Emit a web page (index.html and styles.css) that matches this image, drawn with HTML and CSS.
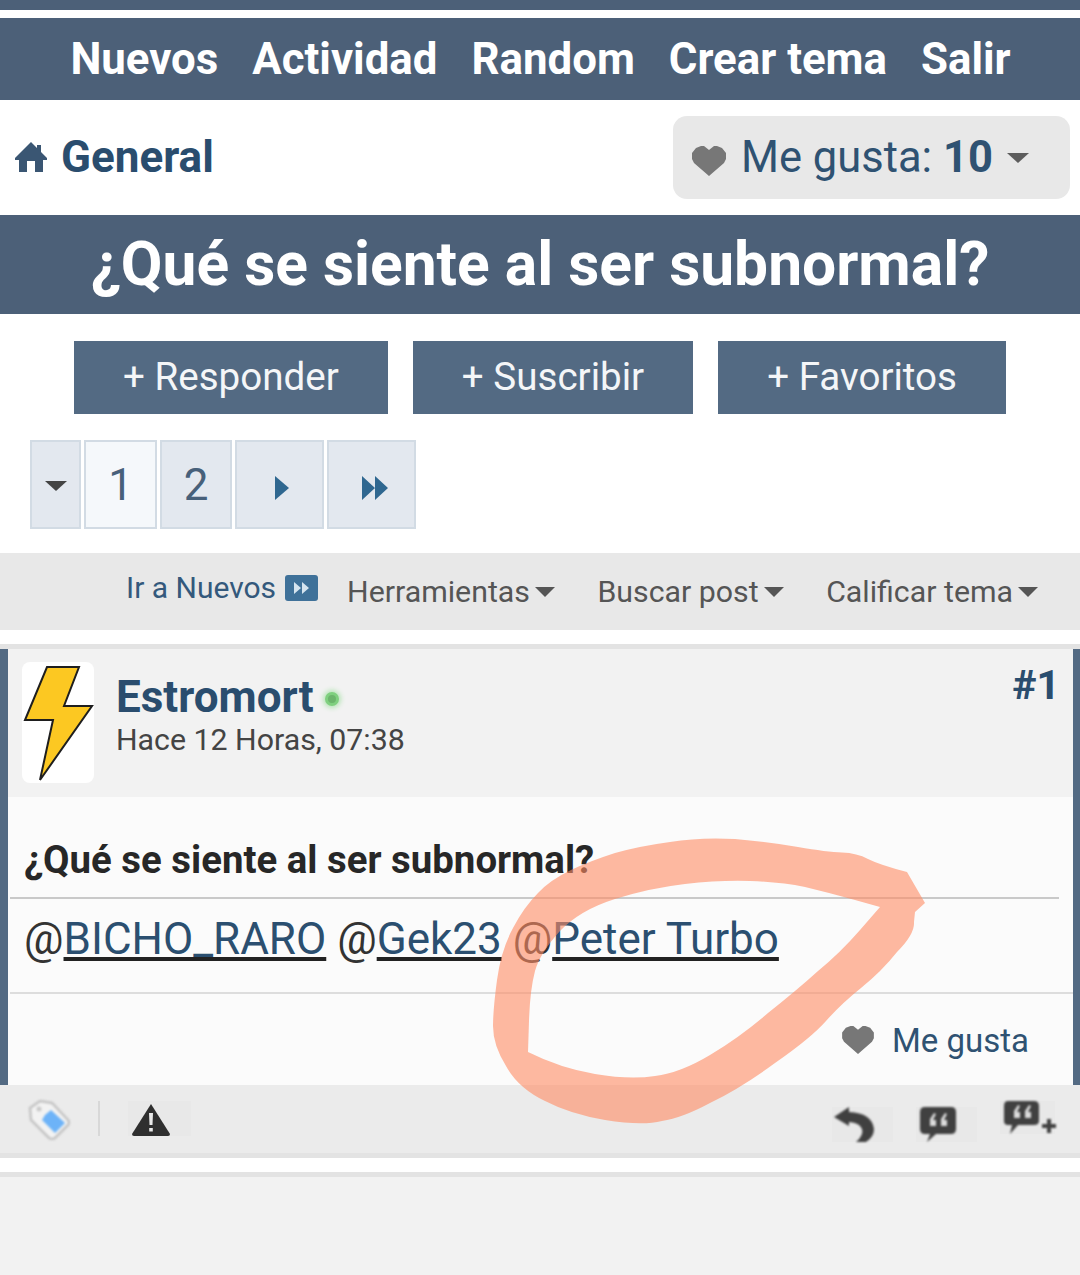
FILE: index.html
```html
<!DOCTYPE html>
<html lang="es">
<head>
    <meta charset="UTF-8">
    <meta name="viewport" content="width=device-width, initial-scale=1.0">
    <title>¿Qué se siente al ser subnormal?</title>
    <link rel="stylesheet" href="styles.css">
</head>
<body>
    <div class="page">
        <div class="top-strip"></div>

        <nav class="main-nav">
            <a>Nuevos</a>
            <a>Actividad</a>
            <a>Random</a>
            <a>Crear tema</a>
            <a>Salir</a>
        </nav>

        <div class="crumb-row">
            <div class="crumb">
                <svg class="home-icon" viewBox="0 0 32 30"><path d="M16 0 L22 6 V3 H26 V10 L32 16 V18 H28 V30 H20 V19 H12 V30 H4 V18 H0 V16 Z"/></svg>
                <span>General</span>
            </div>
            <div class="like-pill">
                <svg class="heart heart-big" viewBox="0 0 34 30"><path d="M17 30 L2 17 L0 13 V7 L4 2 L9 0 H12 L17 4 L22 0 H25 L30 2 L34 7 V13 L32 17 Z"/></svg>
                <span>Me gusta: <b>10</b></span>
                <i class="caret caret-pill"></i>
            </div>
        </div>

        <h1 class="thread-title">¿Qué se siente al ser subnormal?</h1>

        <div class="action-row">
            <a class="action-btn">+ Responder</a>
            <a class="action-btn">+ Suscribir</a>
            <a class="action-btn">+ Favoritos</a>
        </div>

        <div class="pager">
            <div class="page-cell cell-menu"><i class="caret"></i></div>
            <div class="page-cell cell-num cell-active">1</div>
            <div class="page-cell cell-num">2</div>
            <div class="page-cell cell-arrow">
                <svg class="pager-arrow" viewBox="0 0 14 24"><path d="M0 0 L14 12 L0 24 Z"/></svg>
            </div>
            <div class="page-cell cell-arrow">
                <svg class="pager-arrow" viewBox="0 0 26 24"><path d="M0 0 L13 12 L0 24 Z M13 0 L26 12 L13 24 Z"/></svg>
            </div>
        </div>

        <div class="tool-row">
            <a class="tool-new">Ir a Nuevos
                <svg class="new-icon" viewBox="0 0 33 26"><rect width="33" height="26" rx="3" fill="#3f7199"/><path d="M9 7 L16 13 L9 19 Z M17 7 L24 13 L17 19 Z" fill="#d5e4ef"/></svg>
            </a>
            <a class="tool-item">Herramientas<i class="caret caret-tool"></i></a>
            <a class="tool-item">Buscar post<i class="caret caret-tool"></i></a>
            <a class="tool-item">Calificar tema<i class="caret caret-tool"></i></a>
        </div>

        <article class="post">
            <header class="post-head">
                <div class="avatar">
                    <svg class="bolt" viewBox="0 0 72 121"><path d="M25 5 H57 L42 44 H70 L18 118 L31 58 H3 Z" fill="#fcc822" stroke="#1e1e1e" stroke-width="2"/></svg>
                </div>
                <div class="post-meta">
                    <div class="post-author">Estromort<span class="online-dot"></span></div>
                    <div class="post-date">Hace 12 Horas, 07:38</div>
                </div>
                <a class="post-number">#1</a>
            </header>

            <div class="post-body">
                <h2 class="post-title">¿Qué se siente al ser subnormal?</h2>
                <p class="post-text">@<a>BICHO_RARO</a> @<a>Gek23</a> @<a>Peter Turbo</a></p>
                <div class="post-like">
                    <svg class="heart heart-small" viewBox="0 0 34 30"><path d="M17 30 L2 17 L0 13 V7 L4 2 L9 0 H12 L17 4 L22 0 H25 L30 2 L34 7 V13 L32 17 Z"/></svg>
                    <span>Me gusta</span>
                </div>
            </div>

            <footer class="post-foot">
                <div class="foot-left">
                    <svg class="tag-icon" viewBox="0 0 42 40"><path d="M2 8 L12 1 L24 3 L40 20 Q42 23 40 25 L27 38 Q24 40 21 38 L3 20 Z" fill="#f2f2f2" stroke="#c4c4c4" stroke-width="2.5"/><path d="M17 15 L23 10 L37 23 L27 33 L14 20 Z" fill="#6db3f8"/><circle cx="11" cy="9" r="2.5" fill="#c9c9c9"/></svg>
                    <span class="foot-sep"></span>
                    <span class="foot-box warn-box">
                        <svg class="warn-icon" viewBox="0 0 38 32"><path d="M19 0 L38 30 Q38 32 36 32 H2 Q0 32 0 30 Z" fill="#2f2f2f"/><path d="M17 9 H21 L20.5 21 H17.5 Z M17.2 24 H20.8 V27.5 H17.2 Z" fill="#e8e8e8"/></svg>
                    </span>
                </div>
                <div class="foot-right">
                    <span class="foot-box foot-box-low">
                        <svg class="reply-icon" viewBox="0 0 40 35"><path d="M0 10 L15 0 V5 Q38 6 40 22 Q40 30 32 35 H22 Q30 28 28 22 Q26 16 15 15 V19 Z" fill="#404040"/></svg>
                    </span>
                    <span class="foot-box foot-box-low">
                        <svg class="quote-icon" viewBox="0 0 36 35"><path d="M5 0 H31 Q36 0 36 5 V22 Q36 27 31 27 H16 L7 35 L10 27 H5 Q0 27 0 22 V5 Q0 0 5 0 Z" fill="#404040"/><path d="M14 6 L10 12 V19 H16 V13 H13 L16 7 Z M25 6 L21 12 V19 H27 V13 H24 L27 7 Z" fill="#dcdcdc"/></svg>
                    </span>
                    <span class="foot-box foot-box-multi">
                        <svg class="multi-icon" viewBox="0 0 52 33"><path d="M4 0 H30 Q35 0 35 5 V20 Q35 24 30 24 H14 L6 33 L8 24 H4 Q0 24 0 20 V5 Q0 0 4 0 Z" fill="#404040"/><path d="M14 4 L10 10 V17 H16 V11 H13 L16 5 Z M25 4 L21 10 V17 H27 V11 H24 L27 5 Z" fill="#dcdcdc"/><path d="M43 18 H47 V23 H52 V27 H47 V32 H43 V27 H38 V23 H43 Z" fill="#404040"/></svg>
                    </span>
                </div>
            </footer>
        </article>

        <div class="page-bottom"></div>

        <svg class="scribble" viewBox="0 0 1080 1275">
            <path fill-rule="evenodd" d="M925 903 L907 872 Q880 865 868 859 Q857 853 842 852.5 Q827 852 798 847 Q770 842 735 839 Q700 837 670 842 Q640 846 615 853 Q590 861 571 870 Q550 880 538 893 Q524 907 513 928 Q501 950 497 980 Q493 1010 493 1026 Q493 1045 506 1066 Q518 1088 545 1101 Q570 1114 605 1120 Q642 1126 662 1121 Q682 1118 710 1103 Q741 1088 775 1063 Q811 1038 826 1021 Q841 1004 861 988 Q882 971 897 952 Q915 934 914 922 L915 912 Z M880 907 L855 900 Q830 893 805 887 Q780 882 750 881 Q720 880 685 884 Q650 888 615 899 Q580 910 560 931 Q540 953 535 971 Q530 990 529 1021 L528 1052 Q560 1068 595 1074 Q630 1080 655 1076 Q680 1073 710 1055 Q740 1037 768 1013 Q797 990 818 971 Q840 953 860 930 Z"/>
        </svg>
    </div>
</body>
</html>
```

FILE: styles.css
```css
body {
    font-family: Roboto, 'Liberation Sans', sans-serif;
    margin: 0;
    background: #fff;
    color: #333;
}
.page {
    position: relative;
    width: 1080px;
    height: 1275px;
    overflow: hidden;
}
.top-strip {
    height: 10px;
    margin-bottom: 8px;
    background: #4c6078;
}
.main-nav {
    display: flex;
    justify-content: center;
    gap: 34px;
    height: 82px;
    padding-left: 1px;
    box-sizing: border-box;
    align-items: center;
    background: #4c6078;
    color: #fff;
    font-size: 43.8px;
    font-weight: 700;
}
.crumb-row {
    display: flex;
    justify-content: space-between;
    align-items: center;
    height: 115px;
    padding: 0 10px 0 15px;
}
.crumb {
    display: flex;
    align-items: center;
    gap: 14px;
    margin-top: -2px;
    font-size: 44px;
    font-weight: 700;
    color: #2a4d6e;
}
.home-icon {
    width: 32px;
    height: 30px;
    fill: #3a5673;
}
.like-pill {
    display: flex;
    align-items: center;
    width: 397px;
    height: 83px;
    box-sizing: border-box;
    padding-left: 19px;
    background: #e8e8e8;
    border-radius: 14px;
    font-size: 43.5px;
    color: #2f5272;
}
.like-pill b {
    font-weight: 700;
}
.heart {
    fill: #777;
}
.heart-big {
    width: 34px;
    height: 30px;
    margin: 7px 15px 0 0;
}
.heart-small {
    width: 34px;
    height: 28px;
}
.caret {
    display: inline-block;
    width: 0;
    height: 0;
    border-left: 11px solid transparent;
    border-right: 11px solid transparent;
    border-top: 10px solid #444;
}
.caret-pill {
    margin-left: 14px;
    opacity: .85;
}
.thread-title {
    margin: 0;
    height: 99px;
    line-height: 99px;
    text-align: center;
    background: #4c6078;
    color: #fff;
    font-size: 60.5px;
    font-weight: 700;
}
.action-row {
    display: flex;
    gap: 25px;
    padding: 27px 0 0 74px;
}
.action-btn {
    height: 73px;
    line-height: 72px;
    padding: 0 49px;
    background: #536a83;
    color: #f4f6f8;
    font-size: 38.6px;
}
.pager {
    display: flex;
    gap: 3px;
    padding: 26px 0 0 30px;
}
.page-cell {
    display: flex;
    justify-content: center;
    align-items: center;
    box-sizing: border-box;
    height: 89px;
    background: #e3e8ef;
    border: 2px solid #d2dbe4;
    color: #47607a;
    font-size: 44px;
}
.cell-menu {
    width: 51px;
    padding-top: 2px;
}
.cell-num {
    width: 73px;
}
.cell-num:nth-child(3) {
    width: 72px;
}
.cell-active {
    background: #f5f8fb;
}
.cell-arrow {
    width: 89px;
    padding: 6px 0 0 4px;
}
.cell-arrow:last-child {
    padding-left: 6px;
}
.pager-arrow {
    height: 24px;
    fill: #2f6790;
}
.tool-row {
    display: flex;
    justify-content: flex-end;
    align-items: center;
    gap: 42.5px;
    height: 77px;
    margin-top: 24px;
    padding-right: 42px;
    background: #e8e8e8;
    color: #555;
    font-size: 30.3px;
}
.tool-new {
    display: flex;
    align-items: center;
    gap: 9px;
    margin-right: -13.5px;
    margin-top: -8px;
    font-size: 30px;
    color: #34597c;
}
.new-icon {
    width: 33px;
    height: 26px;
}
.tool-item {
    display: flex;
    align-items: center;
    gap: 5px;
}
.caret-tool {
    margin-top: 1px;
    border-left-width: 10.5px;
    border-right-width: 10.5px;
    border-top-color: #555;
}
.post {
    margin-top: 14px;
    border-top: 5px solid #e3e3e3;
}
.post-head {
    display: flex;
    height: 148px;
    box-sizing: border-box;
    padding: 13px 13px 0 14px;
    background: #f2f2f2;
    border-left: 8px solid #536a83;
    border-right: 7px solid #536a83;
}
.avatar {
    width: 72px;
    height: 121px;
    background: #fff;
    border-radius: 8px;
}
.bolt {
    display: block;
    width: 72px;
    height: 121px;
}
.post-meta {
    margin-left: 23px;
    padding-top: 7px;
}
.post-author {
    display: flex;
    align-items: center;
    font-size: 44px;
    font-weight: 700;
    line-height: 56px;
    margin-left: -1px;
    color: #2a4d6e;
}
.online-dot {
    width: 14px;
    height: 14px;
    margin: 4px 0 0 11px;
    border-radius: 50%;
    background: #6cb56c;
    border: 3px solid #7fd07f;
    box-sizing: border-box;
    box-shadow: 0 0 5px 2px #b4e4b4;
}
.post-date {
    font-size: 30.3px;
    line-height: 40px;
    margin: -5px 0 0 -1px;
    color: #444;
}
.post-number {
    margin-left: auto;
    font-size: 41px;
    font-weight: 700;
    line-height: 46px;
    color: #2a4d6e;
}
.post-body {
    height: 288px;
    box-sizing: border-box;
    background: #fbfbfb;
    border-left: 8px solid #536a83;
    border-right: 7px solid #536a83;
    padding-left: 2px;
}
.post-title {
    margin: 0 14px 0 0;
    padding: 40px 0 14px 14px;
    height: 46px;
    line-height: 46px;
    font-size: 38.4px;
    font-weight: 700;
    color: #272727;
    border-bottom: 2px solid #c9c9c9;
}
.post-text {
    margin: 0;
    height: 93px;
    padding-left: 14px;
    font-size: 44px;
    line-height: 80px;
    color: #333;
    border-bottom: 2px solid #ddd;
}
.post-text a {
    color: #2b4f70;
    text-decoration: underline;
    text-decoration-color: #222;
}
.post-like {
    display: flex;
    justify-content: flex-end;
    align-items: center;
    gap: 17px;
    height: 92px;
    padding-right: 44px;
    font-size: 33px;
    color: #2f5272;
}
.post-foot {
    display: flex;
    justify-content: space-between;
    height: 68px;
    background: #ebebeb;
    border-bottom: 5px solid #e3e3e3;
}
.foot-left {
    display: flex;
    align-items: flex-start;
    padding: 16px 0 0 28px;
}
.foot-right {
    display: flex;
    align-items: flex-start;
    gap: 23px;
    padding: 16px 25px 0 0;
}
.foot-sep {
    width: 2px;
    height: 35px;
    margin: 0 28px 0 28px;
    background: #d8d8d8;
}
.foot-box {
    display: flex;
    width: 61px;
    height: 35px;
    box-sizing: border-box;
    padding-left: 2px;
    background: #e8e8e8;
}
.foot-box-low {
    margin-top: 6px;
}
.foot-box-low + .foot-box-low {
    padding-left: 4px;
}
.warn-box {
    width: 63px;
    padding-left: 4px;
}
.foot-box-multi {
    width: 55px;
    height: 33px;
    padding-left: 4px;
}
.tag-icon {
    width: 42px;
    height: 40px;
    margin-top: -1px;
    filter: blur(1px);
}
.warn-icon {
    width: 38px;
    height: 32px;
    margin-top: 3px;
    filter: blur(.6px);
}
.reply-icon {
    width: 40px;
    height: 35px;
    filter: blur(.9px);
}
.quote-icon {
    width: 36px;
    height: 35px;
    filter: blur(.9px);
}
.multi-icon {
    width: 52px;
    height: 33px;
    flex: none;
    filter: blur(.9px);
}
.page-bottom {
    height: 98px;
    margin-top: 14px;
    background: #f2f2f2;
    border-top: 5px solid #e3e3e3;
}
.scribble {
    position: absolute;
    top: 0;
    left: 0;
    width: 1080px;
    height: 1275px;
    fill: rgb(255, 140, 100);
    opacity: .6;
    pointer-events: none;
}
```
